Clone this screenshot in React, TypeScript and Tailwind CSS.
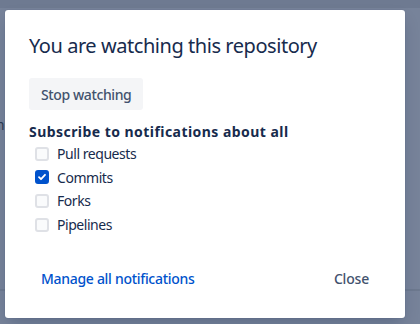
import React, { useState } from 'react';

type Option = { id: string; label: string };

const OPTIONS: Option[] = [
  { id: 'pr', label: 'Pull requests' },
  { id: 'commits', label: 'Commits' },
  { id: 'forks', label: 'Forks' },
  { id: 'pipelines', label: 'Pipelines' },
];

const Checkbox: React.FC<{ checked: boolean; onChange: () => void; label: string }> = ({
  checked,
  onChange,
  label,
}) => (
  <label className="flex h-[23.6px] cursor-pointer items-center gap-[8px] pl-[6px]">
    <span
      onClick={onChange}
      className={`flex h-[14px] w-[14px] items-center justify-center rounded-[3px] border-2 ${
        checked ? 'border-[#0052cc] bg-[#0052cc]' : 'border-[#dfe1e6] bg-[#fafbfc]'
      }`}
    >
      {checked && (
        <svg width="10" height="10" viewBox="0 0 10 10" fill="none">
          <path d="M2 5.2l2 2 4-4.4" stroke="white" strokeWidth="1.8" strokeLinecap="round" strokeLinejoin="round" />
        </svg>
      )}
    </span>
    <span className="text-[14px] tracking-[-0.45px] text-[#172b4d]">{label}</span>
  </label>
);

export default function App() {
  const [selected, setSelected] = useState<Record<string, boolean>>({ commits: true });

  const toggle = (id: string) => setSelected((s) => ({ ...s, [id]: !s[id] }));

  return (
    <div
      className="relative h-[324px] w-[420px] overflow-hidden bg-[#77839a]"
      style={{ fontFamily: '"Noto Sans", "Liberation Sans", sans-serif' }}
    >
      {/* page behind the blanket */}
      <div className="h-[8px] bg-[#6e7a91]" />
      <div className="mt-[106px] -ml-[30px] text-[14px] text-[#2c3850]">Forme.</div>
      <div className="mt-[154px] h-[2px] bg-[#6d798f]" />

      {/* modal */}
      <div className="absolute left-[5px] top-[10px] flex h-[308px] w-[400px] flex-col rounded-[3px] bg-white shadow-[0_0_1px_rgba(9,30,66,0.3),0_8px_16px_-4px_rgba(9,30,66,0.25)]">
        <div className="px-[24px] pt-[24px] pb-[20px]">
          <h1 className="text-[20px] leading-[24px] tracking-[-0.45px] text-[#172b4d]">
            You are watching this repository
          </h1>
        </div>

        <div className="flex-1 px-[24px]">
          <button className="h-[32px] rounded-[3px] bg-[#f4f5f7] px-[12px] text-[14px] font-medium tracking-[-0.4px] text-[#42526e]">
            Stop watching
          </button>
          <div className="mt-[12px] text-[14px] font-bold leading-[20px] tracking-[0.45px] text-[#172b4d]">
            Subscribe to notifications about all
          </div>
          <div className="flex flex-col">
            {OPTIONS.map((o) => (
              <Checkbox key={o.id} label={o.label} checked={!!selected[o.id]} onChange={() => toggle(o.id)} />
            ))}
          </div>
        </div>

        <div className="flex items-center justify-between px-[24px] pb-[24px]">
          <button className="h-[32px] rounded-[3px] px-[12px] text-[14px] font-medium tracking-[-0.3px] text-[#0052cc]">
            Manage all notifications
          </button>
          <button className="h-[32px] rounded-[3px] px-[12px] text-[14px] font-medium tracking-[-0.2px] text-[#42526e]">
            Close
          </button>
        </div>
      </div>
    </div>
  );
}
